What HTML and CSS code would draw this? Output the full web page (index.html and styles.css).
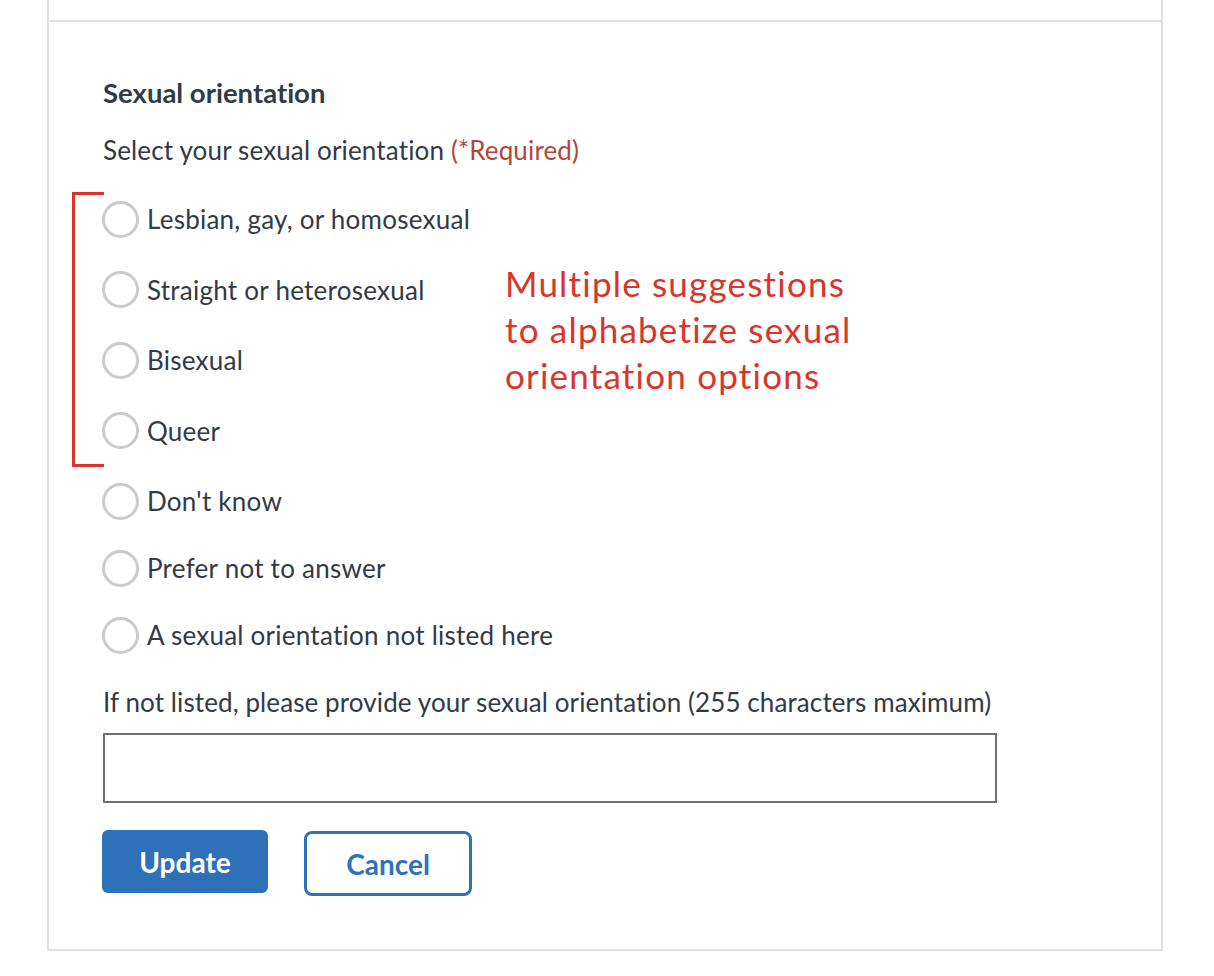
FILE: index.html
```html
<!DOCTYPE html>
<html lang="en">
<head>
<meta charset="utf-8">
<title>Sexual orientation</title>
<link rel="stylesheet" href="styles.css">
</head>
<body>
<div class="card">
  <div class="card-top"></div>
  <form class="section">
    <h2 class="title">Sexual orientation</h2>
    <p class="prompt">Select your sexual orientation <span class="req">(*Required)</span></p>
    <div class="options">
      <label class="option"><span class="radio"></span><span class="opt-text">Lesbian, gay, or homosexual</span></label>
      <label class="option"><span class="radio"></span><span class="opt-text">Straight or heterosexual</span></label>
      <label class="option"><span class="radio"></span><span class="opt-text">Bisexual</span></label>
      <label class="option"><span class="radio"></span><span class="opt-text">Queer</span></label>
      <label class="option"><span class="radio"></span><span class="opt-text">Don't know</span></label>
      <label class="option tight"><span class="radio"></span><span class="opt-text">Prefer not to answer</span></label>
      <label class="option tight"><span class="radio"></span><span class="opt-text">A sexual orientation not listed here</span></label>
    </div>
    <label class="field-label">If not listed, please provide your sexual orientation (255 characters maximum)</label>
    <input class="text-input" type="text">
    <div class="actions">
      <button type="button" class="btn btn-primary">Update</button>
      <button type="button" class="btn btn-secondary">Cancel</button>
    </div>
  </form>
  <div class="bracket"></div>
  <p class="annotation">Multiple suggestions<br>to alphabetize sexual<br>orientation options</p>
</div>
</body>
</html>
```
FILE: styles.css
```css
html, body {
  margin: 0;
  padding: 0;
  background: #ffffff;
}

body {
  font-family: "Lato", "Liberation Sans", sans-serif;
  font-variant-ligatures: none;
  color: #323a45;
}

.card {
  position: relative;
  box-sizing: border-box;
  margin-left: 47px;
  width: 1116px;
  border: 2px solid #e1e1e1;
  border-top: none;
}

.card-top {
  height: 20px;
  border-bottom: 2px solid #e1e1e1;
}

.section {
  padding: 53px 0 53px 54px;
}

.title {
  margin: 0;
  font-size: 27.5px;
  font-weight: 700;
  line-height: 36px;
  color: #323a45;
}

.prompt {
  margin: 21px 0 0;
  font-size: 26px;
  line-height: 36px;
  letter-spacing: 0.15px;
}

.req {
  color: #b3463c;
}

.options {
  margin-top: 33px;
  display: flex;
  flex-direction: column;
}

.option {
  display: flex;
  align-items: center;
  gap: 8px;
  height: 36px;
  font-size: 26px;
  line-height: 36px;
  letter-spacing: 0.25px;
  margin-top: 34.5px;
}

.option:first-child {
  margin-top: 0;
}

.option.tight {
  margin-top: 31px;
}

.radio {
  box-sizing: border-box;
  width: 37px;
  height: 37px;
  flex: 0 0 37px;
  border: 3px solid #cbcbcb;
  border-radius: 50%;
  background: #fff;
  margin-left: -1px;
}

.field-label {
  display: block;
  margin-top: 31px;
  font-size: 26px;
  line-height: 36px;
  letter-spacing: 0.1px;
}

.text-input {
  display: block;
  box-sizing: border-box;
  margin: 13px 0 0;
  width: 894px;
  height: 70px;
  border: 2px solid #6e7276;
  border-radius: 0;
  background: #fff;
  font: inherit;
  outline: none;
}

.actions {
  display: flex;
  align-items: flex-start;
  gap: 36px;
  margin-top: 27px;
  margin-left: -1px;
}

.btn {
  box-sizing: border-box;
  font-family: "Lato", "Liberation Sans", sans-serif;
  font-weight: 700;
  font-size: 28px;
  padding: 0;
  cursor: pointer;
}

.btn-primary {
  width: 166px;
  height: 63px;
  background: #2e71b8;
  color: #ffffff;
  border: none;
  border-radius: 6px;
}

.btn-secondary {
  width: 168px;
  height: 65px;
  margin-top: 1px;
  background: #ffffff;
  color: #2e71b8;
  border: 3px solid #2e71b8;
  border-radius: 8px;
}

.bracket {
  position: absolute;
  left: 23px;
  top: 192px;
  box-sizing: border-box;
  width: 32px;
  height: 275px;
  border: 3px solid #d9352b;
  border-right: none;
}

.annotation {
  position: absolute;
  left: 456px;
  top: 260px;
  margin: 0;
  font-family: "Lato", "Liberation Sans", sans-serif;
  font-size: 35px;
  line-height: 46px;
  letter-spacing: 1.2px;
  color: #d9352b;
}
```
